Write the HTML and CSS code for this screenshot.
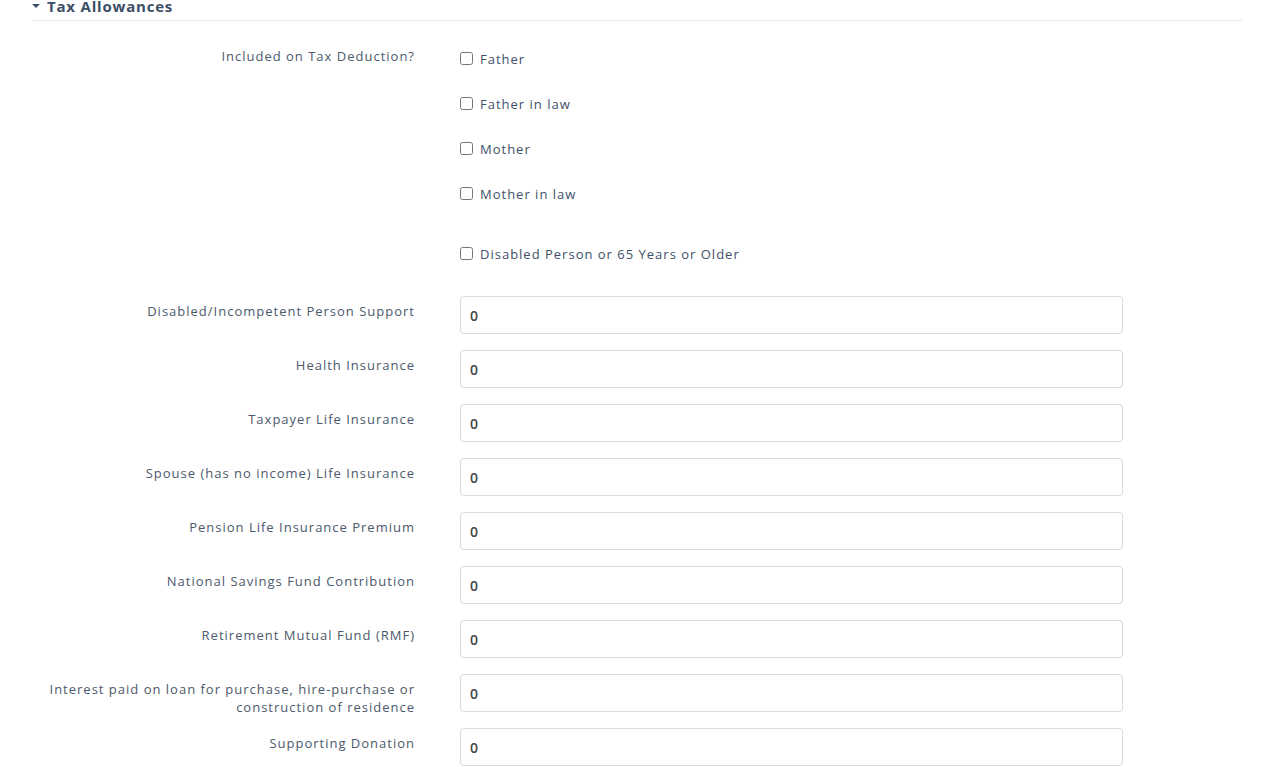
FILE: index.html
```html
<!DOCTYPE html>
<html lang="en">
<head>
    <meta charset="UTF-8">
    <title>Tax Allowances</title>
    <link rel="stylesheet" href="styles.css">
</head>
<body>
    <div class="section">
        <div class="section-title"><span class="caret"></span>Tax Allowances</div>

        <div class="form">
            <div class="row row-checks">
                <label class="label">Included on Tax Deduction?</label>
                <div class="checks">
                    <label class="check"><input type="checkbox"> Father</label>
                    <label class="check"><input type="checkbox"> Father in law</label>
                    <label class="check"><input type="checkbox"> Mother</label>
                    <label class="check"><input type="checkbox"> Mother in law</label>
                </div>
            </div>

            <div class="row row-checks row-single">
                <div class="label"></div>
                <div class="checks">
                    <label class="check"><input type="checkbox"> Disabled Person or 65 Years or Older</label>
                </div>
            </div>

            <div class="row">
                <label class="label">Disabled/Incompetent Person Support</label>
                <input class="field" type="text" value="0">
            </div>
            <div class="row">
                <label class="label">Health Insurance</label>
                <input class="field" type="text" value="0">
            </div>
            <div class="row">
                <label class="label">Taxpayer Life Insurance</label>
                <input class="field" type="text" value="0">
            </div>
            <div class="row">
                <label class="label">Spouse (has no income) Life Insurance</label>
                <input class="field" type="text" value="0">
            </div>
            <div class="row">
                <label class="label">Pension Life Insurance Premium</label>
                <input class="field" type="text" value="0">
            </div>
            <div class="row">
                <label class="label">National Savings Fund Contribution</label>
                <input class="field" type="text" value="0">
            </div>
            <div class="row">
                <label class="label">Retirement Mutual Fund (RMF)</label>
                <input class="field" type="text" value="0">
            </div>
            <div class="row">
                <label class="label">Interest paid on loan for purchase, hire-purchase or construction of residence</label>
                <input class="field" type="text" value="0">
            </div>
            <div class="row">
                <label class="label">Supporting Donation</label>
                <input class="field" type="text" value="0">
            </div>
        </div>
    </div>
</body>
</html>
```

FILE: styles.css
```css
body {
    margin: 0;
    font-family: "Open Sans", Arial, sans-serif;
    background: #fff;
    color: #4b596c;
}
.section {
    margin: 0 35px 0 32px;
}
.section-title {
    margin-top: -4px;
    padding-bottom: 4px;
    border-bottom: 1px solid #e6e6e6;
    font-size: 15px;
    line-height: 20px;
    font-weight: 700;
    letter-spacing: 0.8px;
    color: #3c4e66;
}
.caret {
    display: inline-block;
    width: 0;
    height: 0;
    margin: 0 7px 3px 0;
    border-left: 4px solid transparent;
    border-right: 4px solid transparent;
    border-top: 4px solid #3c4e66;
    vertical-align: middle;
}
.form {
    padding-top: 15px;
}
.row {
    display: grid;
    grid-template-columns: 383px 663px;
    grid-template-rows: 38px;
    column-gap: 45px;
    margin-bottom: 16px;
}
.row-checks {
    grid-template-rows: auto;
    margin-bottom: 15px;
}
.row-single {
    margin-bottom: 20px;
}
.label {
    padding-top: 6px;
    font-size: 13px;
    line-height: 18px;
    letter-spacing: 1px;
    text-align: right;
    color: #4b596c;
}
.row-checks .label {
    padding-top: 11px;
}
.checks {
    display: flex;
    flex-direction: column;
}
.check {
    display: flex;
    align-items: center;
    gap: 7px;
    height: 45px;
    font-size: 13px;
    letter-spacing: 1px;
    color: #3e5068;
}
.check input {
    margin: 0;
    width: 13px;
    height: 13px;
}
.field {
    box-sizing: border-box;
    height: 38px;
    padding: 0 9px;
    border: 1px solid #dadada;
    border-radius: 4px;
    font-family: "Open Sans", Arial, sans-serif;
    font-size: 14px;
    font-weight: 600;
    color: #444;
}
```
